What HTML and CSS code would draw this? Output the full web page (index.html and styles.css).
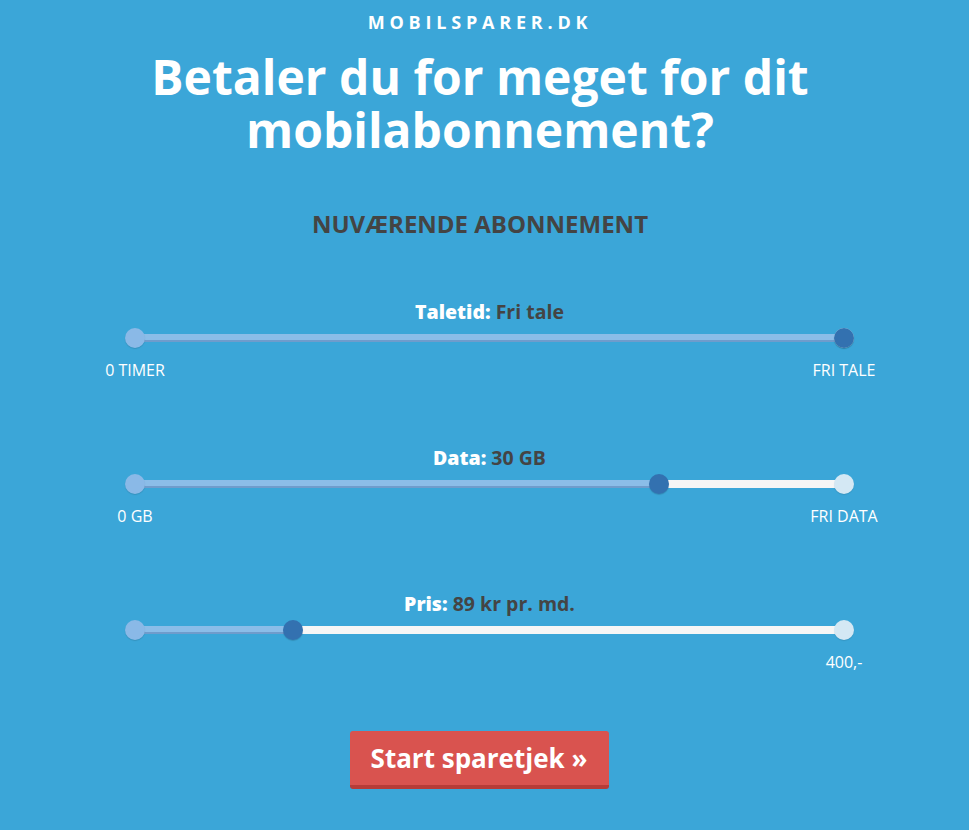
FILE: index.html
```html
<!DOCTYPE html>
<html lang="da">
<head>
<meta charset="utf-8">
<link rel="stylesheet" href="styles.css">
</head>
<body>
<main class="page">
  <div class="brand">MOBILSPARER.DK</div>
  <h1 class="title">Betaler du for meget for dit<br>mobilabonnement?</h1>
  <h2 class="subtitle">NUVÆRENDE ABONNEMENT</h2>

  <section class="slider">
    <div class="slider-label"><b>Taletid:</b> <span class="val">Fri tale</span></div>
    <div class="track-wrap">
      <div class="track">
        <div class="fill" style="width:100%"></div>
        <span class="handle start"></span>
        <span class="handle end"></span>
        <span class="handle active" style="left:100%"></span>
      </div>
    </div>
    <div class="ticks">
      <span class="tick left">0 TIMER</span>
      <span class="tick right">FRI TALE</span>
    </div>
  </section>

  <section class="slider">
    <div class="slider-label"><b>Data:</b> <span class="val">30 GB</span></div>
    <div class="track-wrap">
      <div class="track">
        <div class="fill" style="width:73.9%"></div>
        <span class="handle start"></span>
        <span class="handle end"></span>
        <span class="handle active" style="left:73.9%"></span>
      </div>
    </div>
    <div class="ticks">
      <span class="tick left">0 GB</span>
      <span class="tick right">FRI DATA</span>
    </div>
  </section>

  <section class="slider">
    <div class="slider-label"><b>Pris:</b> <span class="val">89 kr pr. md.</span></div>
    <div class="track-wrap">
      <div class="track">
        <div class="fill" style="width:22.3%"></div>
        <span class="handle start"></span>
        <span class="handle end"></span>
        <span class="handle active" style="left:22.3%"></span>
      </div>
    </div>
    <div class="ticks">
      <span class="tick left"></span>
      <span class="tick right">400,-</span>
    </div>
  </section>

  <div class="cta-row"><button class="cta">Start sparetjek »</button></div>
</main>
</body>
</html>
```
FILE: styles.css
```css
html, body {
  margin: 0;
  padding: 0;
  background: #3ba6d8;
}
body {
  font-family: "Open Sans", "Liberation Sans", sans-serif;
  color: #fff;
  width: 969px;
  height: 830px;
  overflow: hidden;
}
.page {
  display: flex;
  flex-direction: column;
  align-items: center;
  padding-right: 9px;
}
.brand {
  margin-top: 10px;
  font-size: 18px;
  font-weight: 700;
  letter-spacing: 4.8px;
  line-height: 24px;
  padding-left: 0;
}
.title {
  margin: 16px 0 0;
  font-size: 48px;
  font-weight: 700;
  line-height: 53px;
  text-align: center;
}
.subtitle {
  margin: 53px 0 0;
  font-size: 24px;
  font-weight: 700;
  color: #444;
  line-height: 30px;
}
.slider {
  width: 709px;
  display: flex;
  flex-direction: column;
  align-items: center;
  margin-top: 60px;
  margin-left: 19px;
}
.slider + .slider {
  margin-top: 64px;
}
.slider-label {
  font-size: 19.5px;
  line-height: 26px;
  font-weight: 700;
}
.slider-label b {
  color: #fff;
}
.slider-label .val {
  color: #444;
}
.track-wrap {
  width: 100%;
  margin-top: 3px;
  height: 20px;
  display: flex;
  align-items: center;
}
.track {
  position: relative;
  width: 100%;
  height: 8px;
  background: #f6f6f6;
  border-radius: 4px;
}
.fill {
  height: 8px;
  background: #8bbde8;
  border-bottom: 2px solid #6f9ccc;
  box-sizing: border-box;
}
.handle {
  position: absolute;
  top: 50%;
  width: 20px;
  height: 20px;
  border-radius: 50%;
  transform: translate(-50%, -50%);
}
.handle.start {
  left: 0;
  background: #8ab9e7;
  box-shadow: 0 1px 1px rgba(0,0,0,0.12);
}
.handle.end {
  left: 100%;
  background: #d4e8f4;
  box-shadow: 0 1px 1px rgba(0,0,0,0.1);
}
.handle.active {
  background: #3371b0;
  box-shadow: 0 1px 1px rgba(0,0,0,0.15);
}
.ticks {
  width: 100%;
  display: flex;
  justify-content: space-between;
  margin-top: 11px;
  height: 22px;
}
.tick {
  font-family: "Open Sans", "Liberation Sans", sans-serif;
  font-size: 16px;
  line-height: 22px;
  width: 0;
  display: flex;
  justify-content: center;
  white-space: nowrap;
}
.cta-row {
  margin-top: 58px;
  margin-right: 2px;
}
.cta {
  font-family: "Open Sans", "Liberation Sans", sans-serif;
  font-size: 26px;
  font-weight: 700;
  color: #fff;
  background: #d9534f;
  border: 0;
  border-bottom: 4px solid #b73c38;
  border-radius: 3px;
  width: 259px;
  height: 58px;
  padding: 0;
  line-height: 54px;
}
```
